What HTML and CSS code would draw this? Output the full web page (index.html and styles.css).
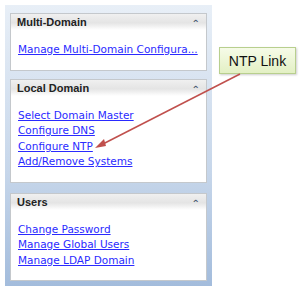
FILE: index.html
```html
<!DOCTYPE html>
<html lang="en">
<head>
  <meta charset="UTF-8">
  <title>Domain Menu</title>
  <link rel="stylesheet" href="styles.css">
</head>
<body>
  <!-- Left navigation -->
  <div class="nav">
    <div class="box">
      <div class="box__head">Multi-Domain <span class="caret">&#8963;</span></div>
      <div class="box__body">
        <a href="#">Manage Multi-Domain Configura...</a>
      </div>
    </div>
    <div class="box">
      <div class="box__head">Local Domain <span class="caret">&#8963;</span></div>
      <div class="box__body">
        <a href="#">Select Domain Master</a>
        <a href="#">Configure DNS</a>
        <a href="#">Configure NTP</a>
        <a href="#">Add/Remove Systems</a>
      </div>
    </div>
    <div class="box">
      <div class="box__head">Users <span class="caret">&#8963;</span></div>
      <div class="box__body">
        <a href="#">Change Password</a>
        <a href="#">Manage Global Users</a>
        <a href="#">Manage LDAP Domain</a>
      </div>
    </div>
  </div>

  <!-- Callout -->
  <div class="callout">NTP Link</div>
  <svg class="arrow" width="300" height="295" viewBox="0 0 300 295">
    <line x1="240" y1="74" x2="99" y2="146" stroke="#c0504d" stroke-width="1.5"/>
    <path d="M95 148 L104 139 L106 146 Z" fill="#c0504d"/>
  </svg>
</body>
</html>
```

FILE: styles.css
```css
body {
  margin: 0;
  width: 300px;
  height: 295px;
  background: #fff;
  position: relative;
  overflow: hidden;
  font-family: "DejaVu Sans", Verdana, sans-serif;
}

.nav {
  margin: 5px 0 0 5px;
  width: 197px;
  padding: 8px 5px 5px 5px;
  display: flex;
  flex-direction: column;
  gap: 8px;
  background: linear-gradient(#e8eff7, #c6d6ea 60%, #a3bcdc);
}

.nav .box:last-child {
  margin-top: 2px;
}

.box {
  background: #fff;
  border: 1px solid #c4c8cc;
}

.box__head {
  display: flex;
  justify-content: space-between;
  align-items: center;
  height: 16px;
  padding: 0 6px 0 6px;
  font: bold 11px "Liberation Sans", Arial, sans-serif;
  color: #222;
  background: linear-gradient(#f0f0f0, #e4e4e4 55%, #fff);
}

.caret {
  font: bold 10px "DejaVu Sans", sans-serif;
  color: #4b5b73;
  margin-top: 3px;
}

.box__body {
  display: flex;
  flex-direction: column;
  padding: 12px 8px 12px 7px;
}

.box__body a {
  font-size: 10.5px;
  line-height: 15.5px;
  color: #2a2aff;
  text-decoration: underline;
  white-space: nowrap;
}

.callout {
  position: absolute;
  left: 219px;
  top: 47px;
  width: 77px;
  height: 27px;
  border: 1px solid #b8cf8e;
  box-sizing: border-box;
  display: flex;
  align-items: center;
  justify-content: center;
  font: 14px "Liberation Sans", Arial, sans-serif;
  color: #111;
  background: linear-gradient(#f6fbe8, #e3f0c4);
  box-shadow: 1px 1px 2px rgba(0, 0, 0, 0.2);
}

.arrow {
  position: absolute;
  left: 0;
  top: 0;
  pointer-events: none;
}
```
